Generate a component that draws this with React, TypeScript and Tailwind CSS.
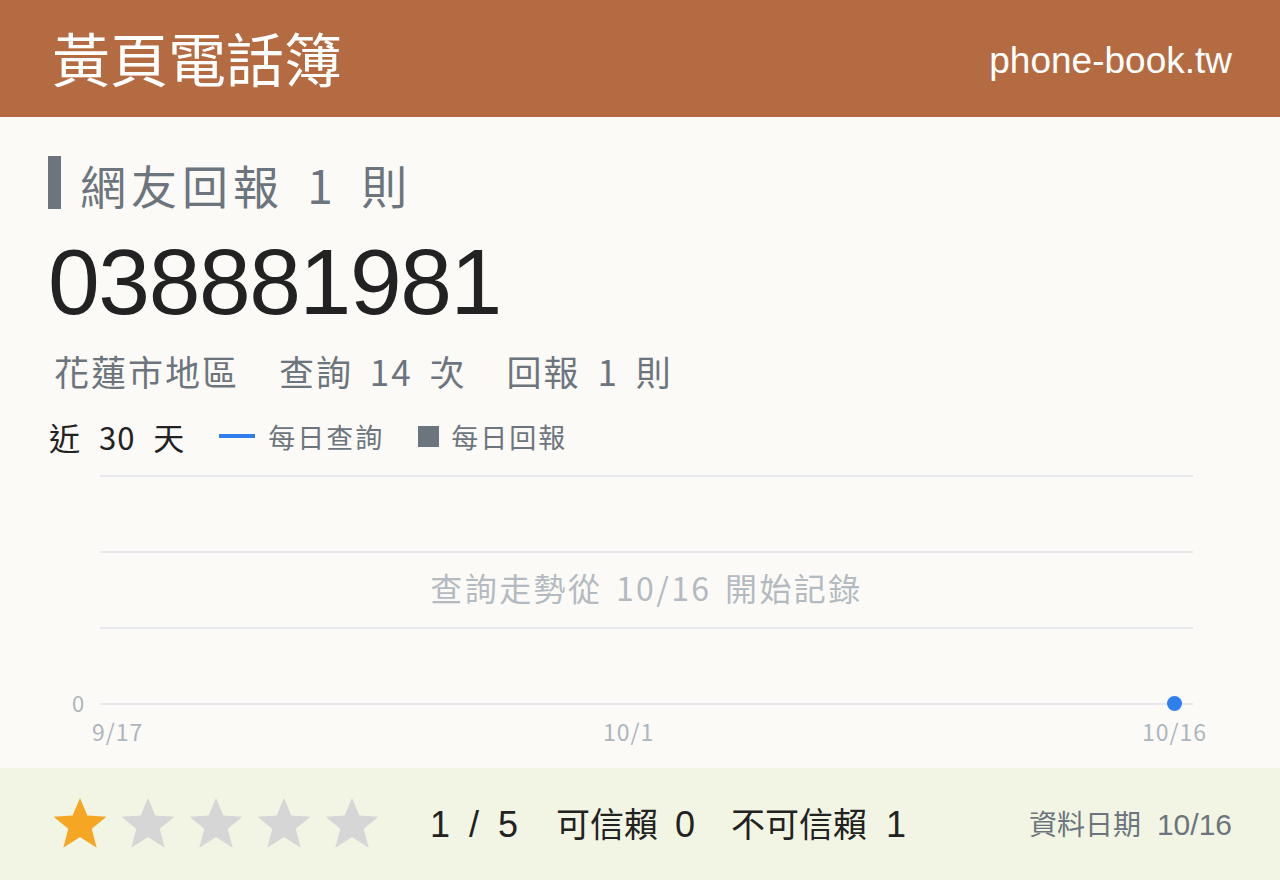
import React from "react";

const cjk = "'Noto Sans CJK TC', 'Noto Sans CJK SC', sans-serif";
const latin = "'Liberation Sans', 'Noto Sans CJK TC', sans-serif";

function Star({ filled }: { filled: boolean }) {
  return (
    <svg width="58" height="58" viewBox="0 0 24 24" className="block">
      <path
        d="M12 1.2l3.05 7.3 7.9.45-6.1 5.05 2.05 7.8L12 17.4l-6.9 4.4 2.05-7.8-6.1-5.05 7.9-.45z"
        fill={filled ? "#f5a623" : "#d6d6d6"}
      />
    </svg>
  );
}

export default function App() {
  const gridRows = [0, 1, 2, 3];
  return (
    <div className="w-[1280px] h-[880px] flex flex-col bg-[#fbfaf6] overflow-hidden" style={{ fontFamily: cjk }}>
      {/* header */}
      <header className="h-[117px] bg-[#b56b41] flex items-center justify-between pl-[52px] pr-[48px] shrink-0">
        <h1 className="text-white text-[58px] leading-none pb-[4px]">黃頁電話簿</h1>
        <span className="text-white text-[37px] leading-none pt-[4px]" style={{ fontFamily: latin }}>
          phone-book.tw
        </span>
      </header>

      <main className="flex-1 flex flex-col px-[48px] pt-[39px]">
        {/* section title */}
        <div className="flex items-center h-[53px]">
          <div className="w-[13px] h-[53px] bg-[#6c757d]" />
          <span className="ml-[19px] pt-[3px] text-[46px] leading-none text-[#6c757d] tracking-[5px] [word-spacing:8px]">
            網友回報 1 則
          </span>
        </div>

        {/* phone number */}
        <div className="mt-[27px] text-[93px] leading-none text-[#222222] tracking-[-1.4px]" style={{ fontFamily: latin }}>
          038881981
        </div>

        {/* summary */}
        <div className="mt-[24px] ml-[6px] flex gap-[40px] text-[35px] leading-none text-[#6c757d] tracking-[2px] [word-spacing:7px]">
          <span>花蓮市地區</span>
          <span>查詢 14 次</span>
          <span>回報 1 則</span>
        </div>

        {/* legend */}
        <div className="mt-[30px] flex items-center h-[36px]">
          <span className="ml-[1px] text-[31px] leading-none text-[#222222] tracking-[1px] [word-spacing:10px]">近 30 天</span>
          <span className="ml-[34px] w-[36px] h-[4px] bg-[#2f80ed]" />
          <span className="ml-[13px] text-[27px] leading-none text-[#6c757d] tracking-[2px]">每日查詢</span>
          <span className="ml-[34px] w-[21px] h-[21px] bg-[#6c757d]" />
          <span className="ml-[12px] text-[27px] leading-none text-[#6c757d] tracking-[2px]">每日回報</span>
        </div>

        {/* chart */}
        <div className="relative mt-[21px] flex-1">
          <div className="ml-[52px] mr-[39px] flex flex-col gap-[74px]">
            {gridRows.map((r) => (
              <div key={r} className="h-[2px] bg-[#e8e9ec]" />
            ))}
          </div>
          <div className="absolute left-[24px] top-[216px] text-[22px] leading-none text-[#adb5bd]">0</div>
          <div className="absolute left-[52px] right-[39px] top-[96px] text-center text-[32px] leading-none text-[#b3bac1] tracking-[2.4px] [word-spacing:4px]">
            查詢走勢從 10/16 開始記錄
          </div>
          <div className="absolute left-[1119px] top-[221px] w-[15px] h-[15px] rounded-full bg-[#2f80ed]" />
          <div className="absolute left-[44px] top-[245px] text-[23px] leading-none text-[#adb5bd] tracking-[1px]">9/17</div>
          <div className="absolute left-[555px] top-[245px] text-[23px] leading-none text-[#adb5bd] tracking-[1px]">10/1</div>
          <div className="absolute left-[1094px] top-[245px] text-[23px] leading-none text-[#adb5bd] tracking-[1px]">10/16</div>
        </div>
      </main>

      {/* footer */}
      <footer className="h-[112px] bg-[#f2f5e3] flex items-center pl-[51px] pr-[48px] shrink-0">
        <div className="flex gap-[10px]">
          {[0, 1, 2, 3, 4].map((i) => (
            <Star key={i} filled={i === 0} />
          ))}
        </div>
        <div className="ml-[49px] flex items-baseline text-[36px] leading-none text-[#222222]" style={{ fontFamily: latin }}>
          <span className="[word-spacing:9px]">1 / 5</span>
          <span className="ml-[38px] text-[34px]" style={{ fontFamily: cjk }}>可信賴</span>
          <span className="ml-[17px]">0</span>
          <span className="ml-[36px] text-[34px]" style={{ fontFamily: cjk }}>不可信賴</span>
          <span className="ml-[19px]">1</span>
        </div>
        <div className="ml-auto flex items-baseline text-[#6c757d] leading-none">
          <span className="text-[28px]">資料日期</span>
          <span className="ml-[16px] text-[30px]" style={{ fontFamily: latin }}>10/16</span>
        </div>
      </footer>
    </div>
  );
}
